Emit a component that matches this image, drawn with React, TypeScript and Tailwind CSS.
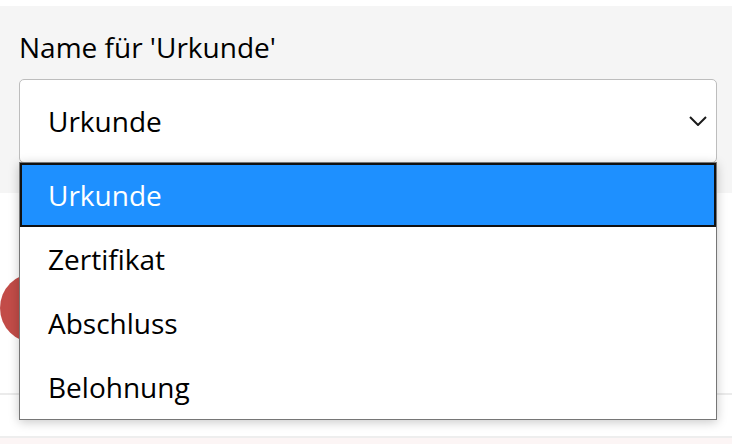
import React from 'react'

const options = ['Urkunde', 'Zertifikat', 'Abschluss', 'Belohnung']

function Chevron() {
  return (
    <svg width="18" height="10" viewBox="0 0 18 10" fill="none">
      <path d="M1 1l8 8 8-8" stroke="#1a1a1a" strokeWidth="2" />
    </svg>
  )
}

export default function App() {
  return (
    <div
      className="w-[732px] h-[444px] overflow-hidden bg-white pt-[6px] text-black"
      style={{ fontFamily: '"Open Sans", "Noto Sans", sans-serif' }}
    >
      {/* Settings panel */}
      <div className="relative z-10 h-[187px] bg-[#f5f5f5] pl-[19px] pr-[15px] pt-[22px]">
        <label className="block text-[28px] leading-[38px]">Name für 'Urkunde'</label>

        <div className="relative mt-[13px]">
          <div className="flex h-[84px] items-center justify-between rounded-[5px] border border-[#bdbdbd] bg-white pl-[28px] pr-[9px] text-[28px] leading-[38px]">
            <span>Urkunde</span>
            <Chevron />
          </div>

          {/* Open list */}
          <div className="absolute left-0 top-[83px] w-[698px] border border-[#767676] bg-white shadow-[0_2px_10px_rgba(0,0,0,0.22)]">
            {options.map((opt, i) => (
              <div
                key={opt}
                className={
                  i === 0
                    ? 'flex h-[64px] items-center border-2 border-[#111] bg-[#1e90ff] pl-[26px] text-[28px] leading-[38px] text-white'
                    : 'flex h-[64px] items-center pl-[28px] text-[28px] leading-[38px]'
                }
              >
                {opt}
              </div>
            ))}
          </div>
        </div>
      </div>

      {/* Content underneath */}
      <div className="h-[202px] border-b-2 border-[#ebebeb] pt-[80px]">
        <div className="h-[70px] w-[70px] rounded-full bg-[#c24c48]" />
      </div>
      <div className="mt-[41px] h-[10px] border-t-2 border-[#eeeeee] bg-[#fcf5f5]" />
    </div>
  )
}
